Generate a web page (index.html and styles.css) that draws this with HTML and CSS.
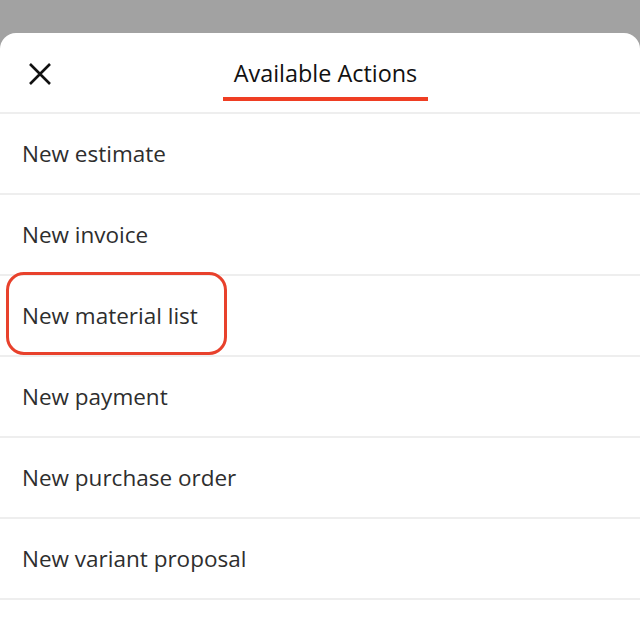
FILE: index.html
```html
<!DOCTYPE html>
<html lang="en">
<head>
  <meta charset="UTF-8">
  <meta name="viewport" content="width=device-width, initial-scale=1.0">
  <title>Available Actions</title>
  <link rel="stylesheet" href="styles.css">
</head>
<body>
  <div class="sheet">
    <div class="sheet-header">
      <button class="close-button" aria-label="Close">
        <svg width="24" height="24" viewBox="0 0 24 24">
          <path d="M2 2 L22 22 M22 2 L2 22" stroke="#111" stroke-width="2.6" fill="none"/>
        </svg>
      </button>
      <h1 class="sheet-title">Available Actions</h1>
    </div>
    <ul class="action-list">
      <li class="action-item">New estimate</li>
      <li class="action-item">New invoice</li>
      <li class="action-item highlight">New material list</li>
      <li class="action-item">New payment</li>
      <li class="action-item">New purchase order</li>
      <li class="action-item">New variant proposal</li>
    </ul>
  </div>
</body>
</html>
```

FILE: styles.css
```css
body {
  margin: 0; background-color: #a2a2a2; font-family: "Open Sans", Arial, sans-serif;
  height: 620px; overflow: hidden; padding-top: 33px; box-sizing: border-box; }
.sheet {
  background: white; border-radius: 16px 16px 0 0; height: 100%; }
.sheet-header {
  height: 81px; display: flex; align-items: center; justify-content: center;
  position: relative; border-bottom: 2px solid #eeeeee; box-sizing: border-box; }
.close-button {
  position: absolute; left: 28px; top: 29px; padding: 0; border: none;
  background: none; width: 24px; height: 24px; cursor: pointer; }
.close-button svg { display: block; }
.sheet-title {
  margin: 0 0 0 11px; font-size: 23.4px; font-weight: 500; color: #111; position: relative;
  line-height: 30px; }
.sheet-title::after {
  content: ""; position: absolute; left: -11px; right: -11px; top: 39px;
  height: 4px; background: #ef3e23; }
.action-list {
  list-style: none; margin: 0; padding: 0; }
.action-item {
  height: 81px; display: flex; align-items: center; padding-left: 22px;
  font-size: 22.5px; color: #2e2e2e; border-bottom: 2px solid #eeeeee;
  box-sizing: border-box; position: relative; }
.highlight::after {
  content: ""; position: absolute; left: 6px; top: -4px; width: 221px; height: 83px;
  border: 3px solid #e8412c; border-radius: 18px; box-sizing: border-box; }
```
